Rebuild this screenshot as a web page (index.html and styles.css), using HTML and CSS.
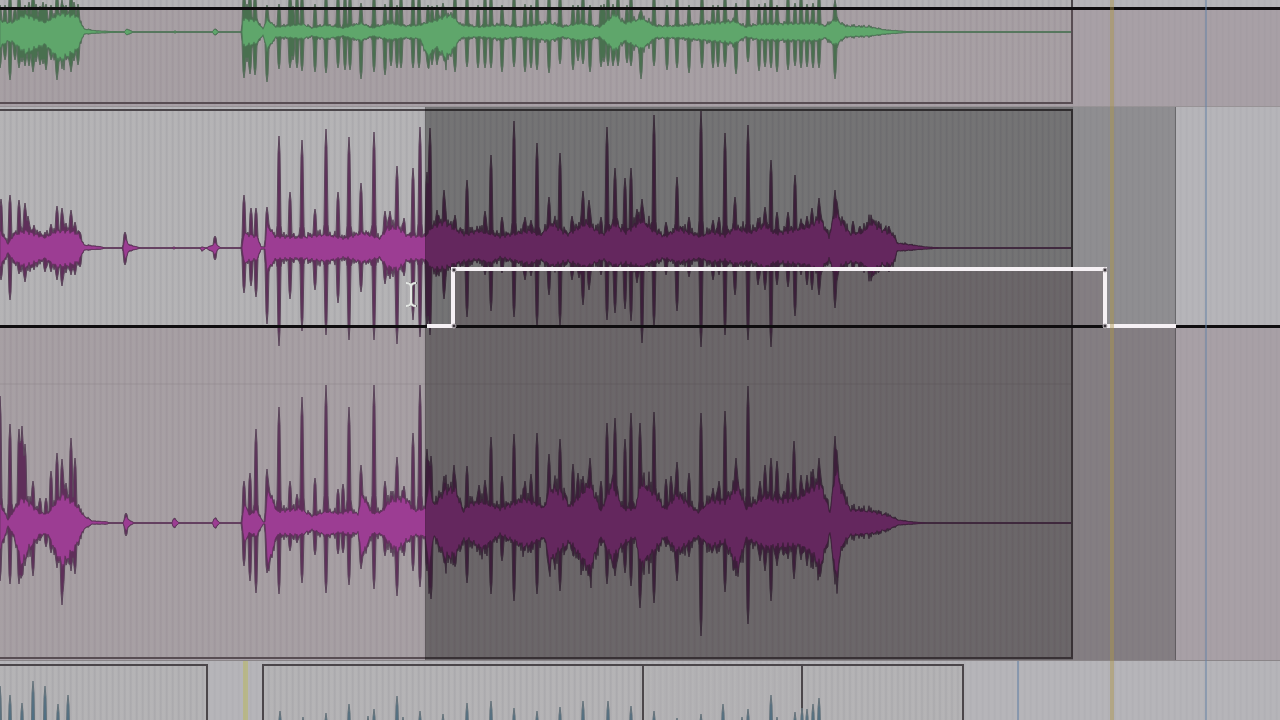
FILE: index.html
```html
<!DOCTYPE html>
<html lang="en">

<head>
    <meta charset="UTF-8">
    <title>Timeline</title>
    <link rel="stylesheet" href="styles.css">
</head>

<body>
    <main class="timeline">
        <!-- Drums -->
        <section class="track track-green">
            <svg class="shade"><rect y="9" width="100%" height="97" /></svg>
            <div class="clip clip-long"></div>
            <svg class="wave" id="waveGreen"></svg>
            <svg class="automation"><rect y="7" width="100%" height="3" /></svg>
        </section>

        <!-- Stereo bass, with the volume lane on top -->
        <section class="track track-purple">
            <svg class="shade">
                <path d="M0 220H453V163H1105V220H4000V555H0Z" />
            </svg>
            <div class="clip clip-long"></div>
            <svg class="wave" id="wavePurple">
                <line class="divider" x1="0" y1="278" x2="1071" y2="278" />
            </svg>
            <div class="selection">
                <div class="selected-clip"></div>
            </div>
            <svg class="automation">
                <rect y="219" width="100%" height="3" />
                <path class="selected-line" d="M427 220H453V163H1105V220H1176" />
                <g class="points">
                    <circle cx="454" cy="164" r="2" />
                    <circle cx="454" cy="220" r="2" />
                    <circle cx="1105" cy="164" r="2" />
                    <circle cx="1105" cy="220" r="2" />
                </g>
                <g class="ibeam">
                    <path d="M406 177Q411 177 411 181Q411 177 416 177M411 181V196M406 200Q411 200 411 196Q411 200 416 200" />
                </g>
            </svg>
        </section>

        <!-- Keys -->
        <section class="track track-blue">
            <div class="clip clip-a"></div>
            <div class="clip clip-b"></div>
            <div class="clip clip-c"></div>
            <div class="clip clip-d"></div>
            <svg class="wave" id="waveBlue"></svg>
            <div class="marker marker-start"></div>
            <div class="marker marker-beat"></div>
        </section>

        <div class="marker marker-loop"></div>
        <div class="marker marker-bar"></div>
    </main>
    <script src="script.js"></script>
</body>

</html>
```
FILE: styles.css
```css
/* Basic reset */
body,
html {
    margin: 0;
    padding: 0;
    height: 100%;
    overflow: hidden;
    background: #b4b2b6;
}

.timeline {
    position: relative;
    display: grid;
    grid-template-rows: 106px 555px 1fr;
    height: 100%;
}

/* Tracks, with the fine beat grid in the background */
.track {
    position: relative;
    display: flex;
    align-items: stretch;
    overflow: hidden;
    box-sizing: border-box;
    background: repeating-linear-gradient(90deg, #b6b5b9 0, #b6b5b9 3px, #b0afb4 5px, #b6b5b9 6px);
}

.track-purple {
    padding-top: 2px;
    padding-bottom: 1px;
    border-top: 1px solid #989396;
    border-bottom: 1px solid #8a8588;
}

.track-blue {
    padding-top: 3px;
}

.track svg {
    position: absolute;
    top: 0;
    left: 0;
    width: 100%;
    height: 100%;
}

.track-purple > svg {
    top: -1px;
    height: 555px;
}

/* Area below the automation line */
.shade {
    fill: rgba(128, 98, 110, 0.25);
}

/* Clips */
.clip {
    box-sizing: border-box;
    flex: none;
    border: 2px solid #4b464a;
    border-left: 0;
    background: repeating-linear-gradient(90deg, rgba(178, 177, 174, 0.3) 0, rgba(178, 177, 174, 0.3) 3px, rgba(158, 156, 158, 0.4) 5px, rgba(178, 177, 174, 0.3) 6px);
}

.clip-long {
    width: 1073px;
}

.track-green .clip {
    height: 104px;
    border-top: 0;
}

.clip-a {
    width: 208px;
    margin-right: 54px;
}

.clip-b {
    width: 382px;
    border-left: 2px solid #4b464a;
}

.clip-c {
    width: 159px;
}

.clip-d {
    width: 161px;
}

.track-blue .clip {
    border-bottom: 0;
}

/* Waveforms: dark peaks behind, the bright body in front */
.wave path {
    stroke-width: 1;
    stroke-linejoin: round;
}

.wave .divider {
    stroke: #8c868a;
    stroke-opacity: 0.5;
}

.track-green .peaks {
    fill: #49704f;
    stroke: #586c5c;
}

.track-green .body {
    fill: #5fa66b;
    stroke: #4b7855;
    stroke-opacity: 0.7;
}

.track-purple .peaks {
    fill: #5f2f5a;
    stroke: #5a455a;
}

.track-purple .body {
    fill: #9c3d93;
    stroke: #5f2f5a;
    stroke-opacity: 0.7;
}

.track-blue .peaks,
.track-blue .body {
    fill: #4f7085;
    stroke: #66737b;
}

/* Time selection */
.selection {
    position: absolute;
    top: -1px;
    bottom: -1px;
    left: 425px;
    width: 751px;
    box-sizing: border-box;
    background: rgba(0, 0, 0, 0.21);
    border: 1px solid rgba(0, 0, 0, 0.25);
}

.selected-clip {
    width: 647px;
    height: 100%;
    background: rgba(0, 0, 0, 0.18);
}

/* Volume automation */
.automation {
    fill: #0f0d0f;
}

.automation .selected-line {
    fill: none;
    stroke: #f6f1f5;
    stroke-width: 4;
}

.points {
    fill: #3a343a;
    stroke: #b5aeb4;
    stroke-width: 1;
}

.ibeam {
    fill: none;
    stroke: #e4e7e4;
    stroke-width: 2;
    filter: drop-shadow(1px 0 0 #6b646b);
}

/* Bar and locator lines */
.marker {
    position: absolute;
    top: 0;
    bottom: 0;
    width: 2px;
}

.marker-loop {
    left: 1110px;
    width: 4px;
    background: rgba(172, 148, 70, 0.45);
}

.marker-start {
    left: 243px;
    width: 5px;
    background: rgba(186, 184, 112, 0.65);
}

.marker-bar {
    left: 1205px;
    background: rgba(100, 130, 165, 0.5);
}

.marker-beat {
    left: 1017px;
    background: rgba(100, 130, 165, 0.55);
}
```
FILE: script.js
```js
// Body: [x, up, down] envelope points. Peaks: x, height above, depth below the centre.
const waves = [
    {
        id: 'waveGreen', centre: 32, end: 1071,
        body: [[0, 12, 16], [7, 10, 10], [12, 10, 10], [25, 18, 22], [45, 10, 13], [60, 19, 30], [77, 17, 19], [84, 3, 2], [97, 1, 1],
            [124, 0, 0], [127, 3, 3], [133, 0, 0], [173, 0, 0], [175, 1, 1], [177, 0, 0], [212, 0, 0], [215, 3, 3], [219, 0, 0],
            [242, 0, 0], [243, 14, 15], [256, 12, 12], [263, 3, 3], [267, 13, 18], [276, 5, 5], [303, 8, 7], [312, 4, 4], [326, 7, 7],
            [343, 4, 4], [361, 9, 9], [372, 4, 4], [390, 9, 8], [405, 6, 6], [420, 7, 7], [428, 10, 26], [436, 12, 16], [446, 17, 27], [452, 17, 20], [461, 7, 6],
            [480, 5, 5], [500, 7, 7], [520, 5, 5], [550, 9, 9], [562, 5, 5], [580, 9, 9], [600, 5, 5], [615, 19, 20], [624, 9, 9],
            [642, 14, 18], [655, 6, 6], [680, 6, 6], [700, 8, 8], [735, 11, 12], [745, 5, 5], [760, 8, 8], [815, 9, 9], [826, 6, 6],
            [835, 13, 14], [845, 6, 5], [870, 5, 4], [885, 2, 2], [913, 0, 0]],
        peaks: [0, 27, 36, 5, 27, 28, 10, 40, 48, 15, 25, 28, 19, 40, 36, 22, 25, 30, 25, 27, 34, 29, 30, 34, 33, 40, 40, 36, 28, 30, 40, 26, 33, 43, 30, 32, 46, 28, 38, 51, 27, 28, 57, 40, 48,
            62, 32, 33, 66, 27, 25, 71, 40, 40, 74, 30, 29, 78, 28, 33, 244, 40, 46, 247, 28, 30, 250, 40, 42, 255, 40, 43, 267, 27, 50, 279, 28, 37, 290, 40, 36, 293, 26, 28, 297, 40, 36,
            302, 40, 39, 315, 28, 40, 326, 40, 41, 338, 40, 36, 345, 40, 38, 350, 40, 38, 361, 29, 47, 374, 40, 40, 385, 28, 43, 391, 40, 34,
            397, 27, 36, 401, 40, 36, 413, 40, 36, 419, 40, 36, 428, 27, 36, 432, 26, 33, 437, 27, 33, 443, 29, 20, 455, 40, 40, 467, 40, 35, 478, 27, 36, 485, 40, 36, 491, 40, 36,
            502, 27, 40, 514, 40, 35, 525, 28, 40, 531, 27, 36, 537, 40, 38, 549, 40, 41, 560, 40, 32, 573, 27, 38, 578, 27, 29, 583, 40, 32, 590, 27, 40, 601, 27, 35,
            604, 28, 30, 608, 40, 34, 613, 28, 34, 618, 40, 34, 627, 27, 31, 631, 40, 34, 641, 24, 47, 654, 40, 34, 667, 27, 38, 677, 40, 36, 689, 27, 41,
            702, 40, 36, 713, 27, 36, 718, 27, 35, 725, 40, 35, 736, 29, 42, 748, 40, 30, 759, 28, 39, 765, 29, 35, 771, 40, 36, 777, 27, 40,
            788, 40, 38, 795, 29, 34, 801, 40, 36, 807, 28, 35, 813, 29, 36, 819, 40, 36, 835, 32, 47]
    },
    {
        id: 'wavePurple', centre: 142, end: 1071,
        body: [[0, 18, 20], [8, 4, 5], [14, 14, 14], [25, 18, 20], [45, 11, 11], [57, 18, 20], [70, 18, 18], [78, 15, 15], [84, 3, 2], [102, 1, 1], [105, 0, 0], [123, 0, 0],
            [125, 10, 12], [129, 3, 3], [141, 0, 0], [172, 0, 0], [174, 1, 1], [176, 0, 0], [200, 0, 0], [202, 1, 3], [206, 0, 0], [213, 3, 4], [215, 6, 7], [218, 2, 1], [221, 0, 0],
            [242, 0, 0], [244, 15, 15], [257, 12, 12], [261, 1, 1], [265, 1, 1], [267, 24, 24], [275, 12, 12], [300, 11, 11], [325, 14, 14], [345, 10, 10], [362, 16, 15],
            [380, 10, 10], [387, 20, 20], [398, 22, 23], [407, 13, 13], [425, 12, 12], [432, 22, 22], [444, 28, 22], [455, 20, 17], [465, 14, 14], [478, 18, 12], [490, 15, 16],
            [500, 12, 10], [530, 18, 17], [540, 13, 12], [552, 26, 19], [567, 14, 14], [586, 26, 20], [603, 14, 12], [615, 26, 19], [625, 16, 16], [642, 29, 20], [653, 18, 14],
            [665, 12, 11], [678, 20, 15], [700, 12, 11], [712, 17, 15], [725, 13, 13], [735, 21, 17], [750, 16, 14], [765, 24, 21], [775, 15, 15], [808, 22, 18], [820, 31, 25], [829, 11, 11],
            [835, 38, 27], [842, 26, 18], [850, 15, 15], [862, 16, 16], [872, 27, 27], [880, 20, 18], [893, 14, 17], [897, 5, 3], [912, 3, 2], [925, 1, 1], [943, 0, 0]],
        peaks: [1, 49, 32, 10, 53, 52, 19, 48, 26, 25, 45, 34, 28, 32, 20, 34, 23, 22, 40, 17, 15, 45, 16, 24, 51, 24, 24, 57, 42, 32, 62, 40, 38, 66, 25, 25, 71, 38, 27, 75, 26, 27, 80, 16, 19,
            125, 16, 17, 215, 12, 12, 244, 53, 45, 251, 40, 38, 256, 40, 49, 267, 41, 76, 279, 112, 98, 290, 56, 51, 302, 108, 83, 315, 39, 42,
            326, 119, 87, 338, 56, 55, 349, 111, 92, 361, 65, 44, 374, 116, 92, 385, 37, 36, 390, 37, 31, 397, 82, 96, 404, 30, 28, 413, 80, 72,
            420, 121, 89, 427, 76, 80, 430, 120, 87, 437, 38, 27, 444, 58, 51, 455, 33, 22, 467, 68, 69, 485, 37, 27, 491, 93, 63, 502, 31, 25, 514, 127, 69,
            525, 31, 32, 531, 28, 28, 537, 105, 79, 549, 51, 47, 560, 95, 78, 572, 32, 32, 579, 26, 30, 583, 57, 57, 589, 48, 42, 601, 31, 27, 607, 121, 72, 615, 80, 65,
            625, 70, 61, 631, 80, 73, 637, 39, 35, 642, 49, 95, 654, 133, 79, 666, 26, 27, 677, 71, 63, 689, 31, 29, 701, 137, 99, 713, 28, 32,
            719, 31, 27, 725, 115, 87, 735, 51, 47, 748, 123, 92, 758, 30, 37, 765, 41, 42, 771, 88, 99, 777, 36, 37, 788, 36, 39, 795, 73, 68, 801, 29, 27, 807, 32, 37, 812, 40, 42, 819, 50, 47, 835, 58, 60,
            853, 27, 20, 860, 22, 21, 867, 26, 22, 872, 29, 29, 889, 22, 24]
    },
    {
        id: 'wavePurple', centre: 417, end: 1071,
        body: [[0, 20, 28], [8, 3, 3], [14, 13, 13], [22, 26, 45], [28, 22, 28], [40, 10, 12], [48, 10, 12], [62, 30, 45], [75, 20, 26], [84, 7, 6], [92, 2, 1], [107, 1, 1],
            [110, 0, 0], [123, 0, 0], [126, 7, 8], [130, 2, 2], [135, 0, 0], [172, 0, 0], [174, 5, 5], [179, 0, 0], [212, 0, 0], [215, 5, 5], [220, 0, 0],
            [242, 0, 0], [244, 20, 20], [250, 8, 10], [256, 14, 14], [263, 1, 1], [265, 1, 1], [268, 35, 46], [277, 12, 12], [300, 15, 13], [312, 7, 7], [326, 12, 13], [340, 10, 10], [350, 13, 12],
            [358, 9, 10], [362, 30, 35], [372, 10, 11], [382, 12, 12], [390, 23, 22], [397, 25, 29], [405, 26, 20], [414, 13, 13], [425, 15, 14], [429, 42, 48], [434, 18, 12], [445, 34, 36],
            [455, 36, 34], [463, 12, 18], [470, 20, 18], [482, 22, 27], [500, 15, 12], [525, 25, 25], [545, 16, 15], [549, 36, 42], [560, 34, 28], [570, 17, 20], [590, 41, 49], [601, 12, 14],
            [612, 42, 38], [623, 15, 22], [635, 15, 15], [641, 42, 44], [655, 30, 28], [665, 14, 14], [677, 30, 30], [698, 11, 14], [711, 24, 25], [725, 23, 20], [738, 38, 46], [746, 15, 16],
            [765, 28, 26], [780, 24, 25], [800, 27, 24], [812, 37, 32], [820, 42, 46], [830, 11, 10], [836, 58, 58], [842, 32, 23], [850, 14, 13], [872, 12, 11], [890, 7, 6], [898, 3, 2], [912, 1, 1], [928, 0, 0]],
        peaks: [0, 127, 58, 10, 99, 61, 19, 94, 61, 22, 97, 53, 25, 79, 43, 33, 42, 53, 40, 25, 18, 46, 25, 24, 51, 52, 30, 57, 70, 45, 62, 64, 82, 66, 40, 34, 71, 85, 48, 75, 65, 51,
            126, 10, 13, 244, 42, 43, 250, 50, 58, 256, 94, 70, 267, 54, 50, 279, 116, 71, 290, 42, 28, 297, 29, 20, 302, 126, 60, 315, 45, 32, 326, 138, 70, 338, 34, 31,
            343, 39, 30, 349, 116, 62, 361, 58, 46, 374, 138, 66, 385, 42, 33, 391, 32, 30, 397, 66, 73, 404, 37, 33, 413, 90, 48, 420, 138, 64,
            427, 74, 48, 431, 67, 76, 444, 47, 38, 454, 58, 40, 467, 57, 60, 479, 38, 27, 485, 43, 31, 491, 86, 71, 502, 47, 38, 514, 89, 78,
            525, 42, 28, 531, 49, 30, 537, 90, 71, 549, 69, 48, 560, 84, 68, 573, 59, 33, 578, 50, 36, 583, 47, 48, 590, 65, 54, 601, 42, 23, 607, 100, 61,
            615, 105, 53, 625, 84, 50, 631, 110, 63, 640, 100, 85, 654, 111, 80, 666, 44, 24, 671, 47, 28, 677, 61, 58, 689, 50, 34, 701, 110, 113,
            713, 35, 28, 719, 42, 29, 725, 112, 69, 736, 65, 53, 748, 137, 101, 760, 42, 38, 765, 58, 48, 771, 65, 78, 777, 62, 43, 783, 29, 32, 788, 50, 36, 794, 82, 56, 801, 48, 37, 807, 48, 43,
            813, 54, 46, 819, 65, 51, 835, 87, 58]
    },
    {
        id: 'waveBlue', centre: 100, end: 963,
        body: [[0, 10, 10], [963, 10, 10]],
        peaks: [0, 75, 0, 10, 66, 0, 22, 58, 0, 33, 80, 0, 45, 75, 0, 58, 57, 0, 68, 66, 0, 280, 50, 0, 303, 44, 0, 326, 48, 0, 349, 57, 0, 368, 45, 0, 374, 52, 0,
            397, 65, 0, 403, 44, 0, 420, 50, 0, 443, 47, 0, 467, 58, 0, 491, 60, 0, 514, 53, 0, 537, 50, 0, 560, 54, 0, 583, 60, 0, 608, 60, 0, 631, 55, 0,
            654, 50, 0, 677, 43, 0, 701, 47, 0, 723, 57, 0, 742, 44, 0, 748, 52, 0, 771, 66, 0, 777, 44, 0, 795, 49, 0, 802, 53, 0, 807, 52, 0, 813, 57, 0, 819, 63, 0]
    }
];

// Height of the body envelope at x on one side (1 = above, 2 = below)
function bodyLevel(wave, x, side) {
    const body = wave.body;
    for (let i = 1; i < body.length; i++) {
        if (x <= body[i][0]) {
            const t = (x - body[i - 1][0]) / (body[i][0] - body[i - 1][0]);
            const value = body[i - 1][side] + t * (body[i][side] - body[i - 1][side]);
            return value * (0.94 + 0.16 * Math.sin(x * 1.9) * Math.sin(x * 0.7));
        }
    }
    return 0;
}

// Same, with the short peaks on top of the body
function peakLevel(wave, x, side) {
    const base = bodyLevel(wave, x, side);
    let value = base * (1 + 0.35 * Math.abs(Math.sin(x * 1.3) * Math.sin(x * 0.37)));
    for (let i = 0; i < wave.peaks.length; i += 3) {
        const distance = Math.abs(x - wave.peaks[i]);
        if (distance < 3) {
            value = Math.max(value, wave.peaks[i + side] * [1, 0.85, 0.2][distance]);
        }
    }
    return value;
}

function drawWave(wave, className, level) {
    const top = [];
    const bottom = [];
    for (let x = 0; x <= wave.end; x++) {
        top.push(`${x} ${(wave.centre - level(wave, x, 1)).toFixed(1)}`);
        bottom.unshift(`${x} ${(wave.centre + level(wave, x, 2)).toFixed(1)}`);
    }
    const path = document.createElementNS('http://www.w3.org/2000/svg', 'path');
    path.setAttribute('class', className);
    path.setAttribute('d', `M${top.join('L')}L${bottom.join('L')}Z`);
    document.getElementById(wave.id).appendChild(path);
}

waves.forEach(wave => {
    drawWave(wave, 'peaks', peakLevel);
    drawWave(wave, 'body', bodyLevel);
});
```
